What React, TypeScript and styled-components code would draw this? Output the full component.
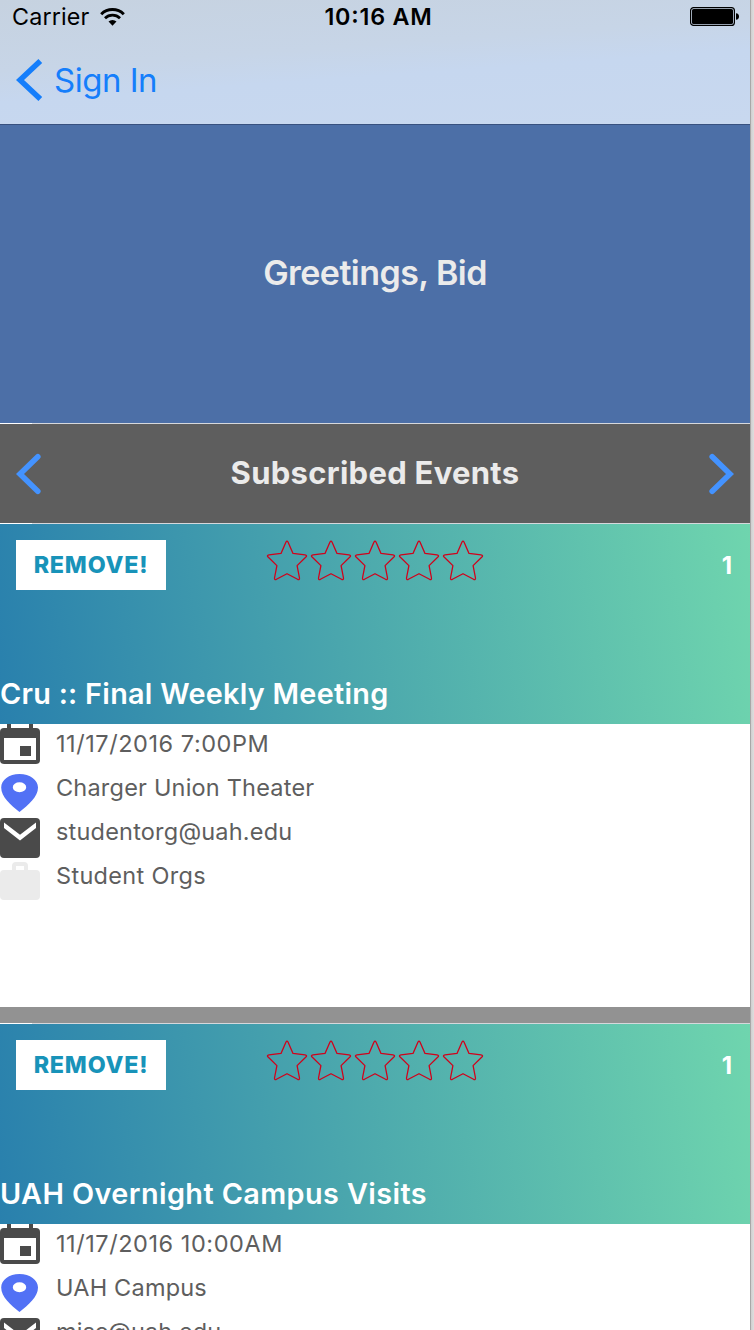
import React from "react";
import styled, { createGlobalStyle } from "styled-components";

const GlobalStyle = createGlobalStyle`
  * { box-sizing: border-box; }
  html, body { margin: 0; padding: 0; background: #dcdcdc; }
  body {
    font-family: Inter, "Liberation Sans", sans-serif;
    font-feature-settings: "calt" 0;
    overflow: hidden;
  }
`;

const Stage = styled.div`
  display: flex;
  width: 754px;
  height: 1330px;
  overflow: hidden;
  background: linear-gradient(90deg, #cfcfcf, #dedede) right / 3px 100% no-repeat;
`;

const Phone = styled.main`
  flex: none;
  width: 751px;
  height: 1330px;
  overflow: hidden;
  border-right: 1px solid #a8a8a8;
  background: #fff;
`;

const Label = styled.span<{ $size: number; $weight?: number; $spacing?: number }>`
  font-size: ${(p) => p.$size}px;
  font-weight: ${(p) => p.$weight ?? 400};
  letter-spacing: ${(p) => p.$spacing ?? 0}px;
  white-space: pre;
`;

const Header = styled.header`
  height: 125px;
  border-bottom: 1px solid #38517f;
  background: linear-gradient(176deg, #c6d2e0 0%, #c7d5e7 40%, #c6d7ef 58%, #c8d8ef 100%);
`;

const StatusBar = styled.div`
  display: grid;
  grid-template-columns: 1fr auto 1fr;
  align-items: center;
  height: 33px;
  padding: 0 11px 0 12px;
  color: #000;
`;

const Carrier = styled.div`
  display: flex;
  align-items: center;
  gap: 11px;
`;

const Clock = styled.div`
  padding-left: 6px;
  font-feature-settings: "calt" 1;
`;

const Battery = styled.svg`
  justify-self: end;
`;

const NavBar = styled.nav`
  display: flex;
  align-items: center;
  height: 94px;
  padding-left: 16px;
  gap: 11px;
  color: #157efb;
`;

const Greeting = styled.section`
  display: flex;
  justify-content: center;
  height: 298px;
  padding-top: 127px;
  line-height: 42px;
  background: #4c6fa7;
  color: #ebebeb;
`;

const Divider = styled.div`
  height: 1px;
  background: linear-gradient(90deg, #fff 32px, #d6d8dc 32px);
`;

const SectionBar = styled.section`
  display: flex;
  align-items: center;
  justify-content: space-between;
  height: 99px;
  padding: 0 16px;
  background: #5e5e5e;
  color: #ebebeb;
`;

const SectionTitle = styled.div`
  padding-bottom: 2px;
`;

const Card = styled.article`
  height: 483px;
  background: #fff;
`;

const CardHero = styled.div`
  display: flex;
  flex-direction: column;
  justify-content: space-between;
  height: 200px;
  background: linear-gradient(82deg, #2980ad 0%, #4aa6ad 45%, #6fd5ae 100%);
  color: #fff;
`;

const CardTools = styled.div`
  display: grid;
  grid-template-columns: 1fr auto 1fr;
  padding: 16px 16px 0;
`;

const RemoveButton = styled.button`
  width: 150px;
  height: 50px;
  padding: 0;
  border: 0;
  background: #fff;
  color: #1893b9;
  font-family: inherit;
  line-height: 49px;
`;

const Count = styled.div`
  padding-right: 2px;
  text-align: right;
  line-height: 51px;
`;

const CardTitle = styled.h2`
  margin: 0;
  height: 50px;
  line-height: 39px;
`;

const Details = styled.ul`
  margin: 0;
  padding: 0;
  list-style: none;
`;

const DetailRow = styled.li`
  display: flex;
  height: 44px;
  gap: 16px;
  line-height: 40px;
  color: #5e5e5e;
`;

const RowIcon = styled.svg`
  flex: none;
  width: 40px;
  height: 44px;
  overflow: visible;
`;

const Spacer = styled.div`
  height: 16px;
  background: #929292;
`;

const Chevron = ({ flip = false }: { flip?: boolean }) => (
  <svg width="25" height="42" viewBox="0 0 25 42">
    <path
      d={flip ? "M3.2 3.7 21 21 3.2 38.3" : "M21.8 3.7 4 21 21.8 38.3"}
      fill="none"
      stroke="#4493ff"
      strokeWidth="5.6"
      strokeLinecap="round"
    />
  </svg>
);

const Stars = () => (
  <svg width="220" height="44" viewBox="0 0 220 44">
    {[0, 1, 2, 3, 4].map((i) => (
      <path
        key={i}
        transform={`translate(${i * 44} 0)`}
        d="M23 2 L28 13.4 L40 14.9 Q42.6 15.4 40.9 17 L32.1 25.6 L34.5 38 Q34.6 40.3 32.6 39.3 L22 33.7 L11.4 39.3 Q9.4 40.3 9.5 38 L11.9 25.6 L3.1 17 Q1.4 15.4 4 14.9 L16 13.4 L21 2 Q22 .2 23 2Z"
        fill="none"
        stroke="#d0021b"
        strokeWidth="1.3"
        strokeLinejoin="round"
      />
    ))}
  </svg>
);

type Kind = "date" | "place" | "mail" | "group";

const DetailIcon = ({ kind }: { kind: Kind }) => (
  <RowIcon viewBox="0 0 40 44">
    {kind === "date" && (
      <>
        <path d="M7 0h4v5H7zM29 0h4v5h-4z" fill="#4a4a4a" />
        <rect y="4" width="40" height="36" rx="4" fill="#4a4a4a" />
        <path d="M4 14h32v22H4z" fill="#fff" />
        <path d="M20 22h11v10H20z" fill="#4a4a4a" />
      </>
    )}
    {kind === "place" && (
      <path
        fillRule="evenodd"
        fill="#5271f5"
        d="M19.5 6C9 6 1.2 12 1.2 19.6C1.2 28.8 10.5 37.2 19.5 44C28.5 37.2 38 28.8 38 19.6C38 12 30 6 19.5 6ZM19.5 14.3a6.7 5 0 1 1 0 10a6.7 5 0 1 1 0-10Z"
      />
    )}
    {kind === "mail" && (
      <>
        <rect y="6" width="40" height="40" rx="4" fill="#4a4a4a" />
        <path d="M4 10.5 20 22.8 36 10.5V16L20 28.5 4 16z" fill="#fff" />
      </>
    )}
    {kind === "group" && (
      <path
        fillRule="evenodd"
        fill="#ebebeb"
        d="M12 14V10Q12 6 16 6H24Q28 6 28 10V14H36Q40 14 40 18V40Q40 44 36 44H4Q0 44 0 40V18Q0 14 4 14ZM16 14H24V10H16Z"
      />
    )}
  </RowIcon>
);

interface Detail {
  kind: Kind;
  text: string;
  spacing: number;
}

interface EventInfo {
  title: string;
  spacing: number;
  details: Detail[];
}

const events: EventInfo[] = [
  {
    title: "Cru :: Final Weekly Meeting",
    spacing: 0.28,
    details: [
      { kind: "date", text: "11/17/2016 7:00PM", spacing: 0.55 },
      { kind: "place", text: "Charger Union Theater", spacing: 0.2 },
      { kind: "mail", text: "studentorg@uah.edu", spacing: 0.2 },
      { kind: "group", text: "Student Orgs", spacing: 0.32 },
    ],
  },
  {
    title: "UAH Overnight Campus Visits",
    spacing: 0.42,
    details: [
      { kind: "date", text: "11/17/2016 10:00AM", spacing: 0.55 },
      { kind: "place", text: "UAH Campus", spacing: 0.2 },
      { kind: "mail", text: "misc@uah.edu", spacing: 0.05 },
    ],
  },
];

const EventCard = ({ event }: { event: EventInfo }) => (
  <Card>
    <CardHero>
      <CardTools>
        <RemoveButton>
          <Label $size={23.3} $weight={800} $spacing={0.8}>REMOVE!</Label>
        </RemoveButton>
        <Stars />
        <Count>
          <Label $size={24} $weight={700}>1</Label>
        </Count>
      </CardTools>
      <CardTitle>
        <Label $size={28.8} $weight={600} $spacing={event.spacing}>{event.title}</Label>
      </CardTitle>
    </CardHero>
    <Details>
      {event.details.map((d) => (
        <DetailRow key={d.text}>
          <DetailIcon kind={d.kind} />
          <Label $size={23.5} $spacing={d.spacing}>{d.text}</Label>
        </DetailRow>
      ))}
    </Details>
  </Card>
);

export default function App() {
  return (
    <>
      <GlobalStyle />
      <Stage>
        <Phone>
          <Header>
            <StatusBar>
              <Carrier>
                <Label $size={23.3} $spacing={0.15}>Carrier</Label>
                <svg width="25" height="18" viewBox="0 0 25 18">
                  <path d="M1.2 6.2A16.2 16.2 0 0 1 23.8 6.2" fill="none" stroke="#000" strokeWidth="3" />
                  <path d="M5 10.2A10.8 10.8 0 0 1 20 10.2" fill="none" stroke="#000" strokeWidth="2.8" />
                  <path d="M8.5 13.5A5.8 5.8 0 0 1 16.5 13.5L12.5 17.8z" fill="#000" />
                </svg>
              </Carrier>
              <Clock>
                <Label $size={23.3} $weight={600} $spacing={0.8}>10:16 AM</Label>
              </Clock>
              <Battery width="49" height="19" viewBox="0 0 49 19">
                <rect x=".6" y=".6" width="43.8" height="17.8" rx="3" fill="none" stroke="#000" strokeWidth="1.2" />
                <rect x="2" y="2" width="41" height="15" rx="1.6" fill="#000" />
                <path d="M46 6.3Q49 6.5 49 9.5T46 12.7z" fill="#000" />
              </Battery>
            </StatusBar>
            <NavBar>
              <svg width="27" height="42" viewBox="0 0 27 42">
                <path d="M24.3 2 4 21 24.3 40" fill="none" stroke="#157efb" strokeWidth="5.5" />
              </svg>
              <Label $size={33} $spacing={-0.5}>Sign In</Label>
            </NavBar>
          </Header>
          <Greeting>
            <Label $size={34} $weight={600} $spacing={-0.55}>Greetings, Bid</Label>
          </Greeting>
          <Divider />
          <SectionBar>
            <Chevron />
            <SectionTitle>
              <Label $size={31} $weight={700} $spacing={0.28}>Subscribed Events</Label>
            </SectionTitle>
            <Chevron flip />
          </SectionBar>
          <Divider />
          <EventCard event={events[0]} />
          <Spacer />
          <Divider />
          <EventCard event={events[1]} />
        </Phone>
      </Stage>
    </>
  );
}
